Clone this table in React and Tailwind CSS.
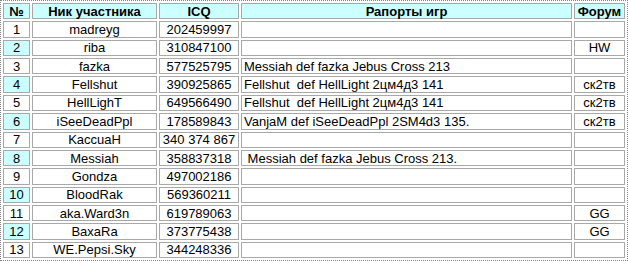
const rows = [
  { n: 1, nick: 'madreyg', icq: '202459997', report: '', forum: '' },
  { n: 2, nick: 'riba', icq: '310847100', report: '', forum: 'HW' },
  { n: 3, nick: 'fazka', icq: '577525795', report: 'Messiah def fazka Jebus Cross 213', forum: '' },
  { n: 4, nick: 'Fellshut', icq: '390925865', report: 'Fellshut  def HellLight 2цм4д3 141', forum: 'ск2тв' },
  { n: 5, nick: 'HellLighT', icq: '649566490', report: 'Fellshut  def HellLight 2цм4д3 141', forum: 'ск2тв' },
  { n: 6, nick: 'iSeeDeadPpl', icq: '178589843', report: 'VanjaM def iSeeDeadPpl 2SM4d3 135.', forum: 'ск2тв' },
  { n: 7, nick: 'KaccuaH', icq: '340 374 867', report: '', forum: '' },
  { n: 8, nick: 'Messiah', icq: '358837318', report: ' Messiah def fazka Jebus Cross 213.', forum: '' },
  { n: 9, nick: 'Gondza', icq: '497002186', report: '', forum: '' },
  { n: 10, nick: 'BloodRak', icq: '569360211', report: '', forum: '' },
  { n: 11, nick: 'aka.Ward3n', icq: '619789063', report: '', forum: 'GG' },
  { n: 12, nick: 'BaxaRa', icq: '373775438', report: '', forum: 'GG' },
  { n: 13, nick: 'WE.Pepsi.Sky', icq: '344248336', report: '', forum: '' },
];

const cell = 'border border-solid border-[#a8a8a8] p-0 h-[16.36px] leading-none align-middle';

export default function App() {
  return (
    <div className="bg-white w-[628px] h-[261px] font-['Liberation_Sans',Arial,sans-serif] text-[13px] text-black">
      <table className="w-[628px] table-fixed border-separate border-spacing-[2px] border border-dotted border-[#808080]">
        <thead>
          <tr className="bg-[#ccffff]">
            <th className={`${cell} w-[27px] font-bold text-center`}>№</th>
            <th className={`${cell} w-[125px] font-bold text-center`}>Ник участника</th>
            <th className={`${cell} w-[80px] font-bold text-center`}>ICQ</th>
            <th className={`${cell} w-[331px] font-bold text-center`}>Рапорты игр</th>
            <th className={`${cell} w-[51px] font-bold text-center`}>Форум</th>
          </tr>
        </thead>
        <tbody>
          {rows.map((r) => (
            <tr key={r.n}>
              <td className={`${cell} text-center ${r.n % 2 === 0 ? 'bg-[#ccffff]' : 'bg-white'}`}>{r.n}</td>
              <td className={`${cell} text-center`}>{r.nick}</td>
              <td className={`${cell} text-center`}>{r.icq}</td>
              <td className={`${cell} text-left pl-[2px] whitespace-pre`}>{r.report}</td>
              <td className={`${cell} text-center`}>{r.forum}</td>
            </tr>
          ))}
        </tbody>
      </table>
    </div>
  );
}
